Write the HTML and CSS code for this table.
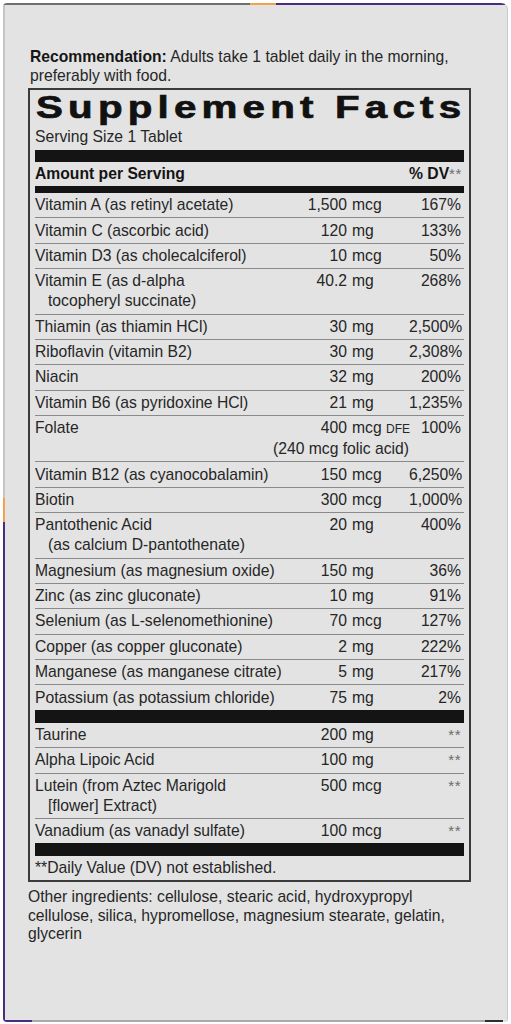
FILE: index.html
```html
<!DOCTYPE html>
<html lang="en">
<head>
    <meta charset="UTF-8">
    <meta name="viewport" content="width=device-width, initial-scale=1.0">
    <title>Supplement Facts</title>
    <link rel="stylesheet" href="styles.css">
</head>
<body>
    <div class="panel">
        <p class="recommendation"><b>Recommendation:</b> Adults take 1 tablet daily in the morning, preferably with food.</p>

        <div class="facts">
            <h1 class="facts-title">Supplement Facts</h1>
            <div class="serving">Serving Size 1 Tablet</div>
            <div class="bar thick"></div>
            <div class="row head">
                <span class="name">Amount per Serving</span>
                <span class="dv">% DV<span class="ast">**</span></span>
            </div>
            <div class="bar medium"></div>

            <div class="row"><span class="name">Vitamin A (as retinyl acetate)</span><span class="num">1,500</span><span class="unit">mcg</span><span class="dv">167%</span></div>
            <div class="row"><span class="name">Vitamin C (ascorbic acid)</span><span class="num">120</span><span class="unit">mg</span><span class="dv">133%</span></div>
            <div class="row"><span class="name">Vitamin D3 (as cholecalciferol)</span><span class="num">10</span><span class="unit">mcg</span><span class="dv">50%</span></div>
            <div class="row"><span class="name">Vitamin E (as d-alpha<span class="sub">tocopheryl succinate)</span></span><span class="num">40.2</span><span class="unit">mg</span><span class="dv">268%</span></div>
            <div class="row"><span class="name">Thiamin (as thiamin HCl)</span><span class="num">30</span><span class="unit">mg</span><span class="dv">2,500%</span></div>
            <div class="row"><span class="name">Riboflavin (vitamin B2)</span><span class="num">30</span><span class="unit">mg</span><span class="dv">2,308%</span></div>
            <div class="row"><span class="name">Niacin</span><span class="num">32</span><span class="unit">mg</span><span class="dv">200%</span></div>
            <div class="row"><span class="name">Vitamin B6 (as pyridoxine HCl)</span><span class="num">21</span><span class="unit">mg</span><span class="dv">1,235%</span></div>
            <div class="row"><span class="name">Folate</span><span class="num">400</span><span class="unit">mcg <small>DFE</small></span><span class="dv">100%</span><span class="extra">(240 mcg folic acid)</span></div>
            <div class="row"><span class="name">Vitamin B12 (as cyanocobalamin)</span><span class="num">150</span><span class="unit">mcg</span><span class="dv">6,250%</span></div>
            <div class="row"><span class="name">Biotin</span><span class="num">300</span><span class="unit">mcg</span><span class="dv">1,000%</span></div>
            <div class="row"><span class="name">Pantothenic Acid<span class="sub">(as calcium D-pantothenate)</span></span><span class="num">20</span><span class="unit">mg</span><span class="dv">400%</span></div>
            <div class="row"><span class="name">Magnesium (as magnesium oxide)</span><span class="num">150</span><span class="unit">mg</span><span class="dv">36%</span></div>
            <div class="row"><span class="name">Zinc (as zinc gluconate)</span><span class="num">10</span><span class="unit">mg</span><span class="dv">91%</span></div>
            <div class="row"><span class="name">Selenium (as L-selenomethionine)</span><span class="num">70</span><span class="unit">mcg</span><span class="dv">127%</span></div>
            <div class="row"><span class="name">Copper (as copper gluconate)</span><span class="num">2</span><span class="unit">mg</span><span class="dv">222%</span></div>
            <div class="row"><span class="name">Manganese (as manganese citrate)</span><span class="num">5</span><span class="unit">mg</span><span class="dv">217%</span></div>
            <div class="row last"><span class="name">Potassium (as potassium chloride)</span><span class="num">75</span><span class="unit">mg</span><span class="dv">2%</span></div>

            <div class="bar thick"></div>

            <div class="row"><span class="name">Taurine</span><span class="num">200</span><span class="unit">mg</span><span class="dv ast">**</span></div>
            <div class="row"><span class="name">Alpha Lipoic Acid</span><span class="num">100</span><span class="unit">mg</span><span class="dv ast">**</span></div>
            <div class="row"><span class="name">Lutein (from Aztec Marigold<span class="sub">[flower] Extract)</span></span><span class="num">500</span><span class="unit">mcg</span><span class="dv ast">**</span></div>
            <div class="row last"><span class="name">Vanadium (as vanadyl sulfate)</span><span class="num">100</span><span class="unit">mcg</span><span class="dv ast">**</span></div>

            <div class="bar thick"></div>
            <div class="footnote">**Daily Value (DV) not established.</div>
        </div>

        <p class="ingredients">Other ingredients: cellulose, stearic acid, hydroxypropyl cellulose, silica, hypromellose, magnesium stearate, gelatin, glycerin</p>
    </div>
</body>
</html>
```

FILE: styles.css
```css
body {
    margin: 0;
    background-color: #fff;
    font-family: "Liberation Sans", Arial, sans-serif;
    font-size: 15.7px;
    color: #262626;
}

.panel {
    box-sizing: border-box;
    width: 505px;
    height: 1019px;
    margin: 3px 0 0 3px;
    padding: 44px 0 0 25px;
    border-radius: 4px 6px 3px 4px;
    box-shadow: inset -1px 0 0 #c9c9c9;
    background:
        linear-gradient(to right, #6f6f6f 0 49%, #f0a348 49% 54%, #4b2c7f 54% 99.4%, transparent 99.4%) top / 100% 2px no-repeat,
        linear-gradient(to bottom, #c4c4c4 0 48.6%, #f0a348 48.6% 50.9%, #4b2c7f 50.9%) left / 2px 100% no-repeat,
        linear-gradient(to right, #4b2c7f 0 5.7%, #a9a9a9 5.7% 95.4%, #2e2e2e 95.4% 99%, transparent 99%) bottom / 100% 2px no-repeat,
        #e3e3e3;
}

.recommendation {
    margin: 0 0 3px 2px;
    width: 445px;
    line-height: 19px;
}

.recommendation b {
    color: #161616;
}

.facts {
    width: 443px;
    box-sizing: border-box;
    border: 2px solid #3b3b3b;
    padding: 0 5px;
}

.facts-title {
    display: inline-block;
    margin: 2px 0 0 1px;
    font-size: 31px;
    line-height: 32px;
    font-weight: bold;
    color: #111;
    letter-spacing: 4px;
    transform: scaleX(1.3);
    transform-origin: left center;
    white-space: nowrap;
    -webkit-text-stroke: 0.7px #111;
}

.serving {
    margin-top: 3px;
    line-height: 20px;
}

.bar {
    background-color: #141414;
}

.bar.thick {
    height: 12px;
    margin-top: 3px;
}

.row + .bar.thick {
    height: 13px;
    margin-top: 0;
}

.bar.medium {
    height: 7px;
}

.row {
    display: grid;
    grid-template-columns: 1fr 60px 62px 52px;
    padding: 2.2px 3px 2.2px 0;
    line-height: 20px;
    border-bottom: 1px solid #8a8a8a;
    white-space: nowrap;
}

.row.last {
    border-bottom: none;
}

.row.head {
    padding: 2px 3px 2px 0;
    border-bottom: none;
    font-weight: bold;
    color: #141414;
}

.row.head .name {
    grid-column: 1 / 4;
}

.name .sub {
    display: block;
    padding-left: 13px;
}

.num {
    text-align: right;
}

.unit {
    padding-left: 5px;
}

.unit small {
    font-size: 12px;
}

.dv {
    text-align: right;
}

.extra {
    grid-column: 1 / 4;
    text-align: right;
}

.ast {
    color: #6d6d6d;
    font-size: 15px;
    letter-spacing: 0.5px;
    font-weight: normal;
}

.footnote {
    padding: 2px 0;
    line-height: 20px;
}

.ingredients {
    margin: 6px 0 0 0;
    width: 445px;
    line-height: 18.5px;
}
```
